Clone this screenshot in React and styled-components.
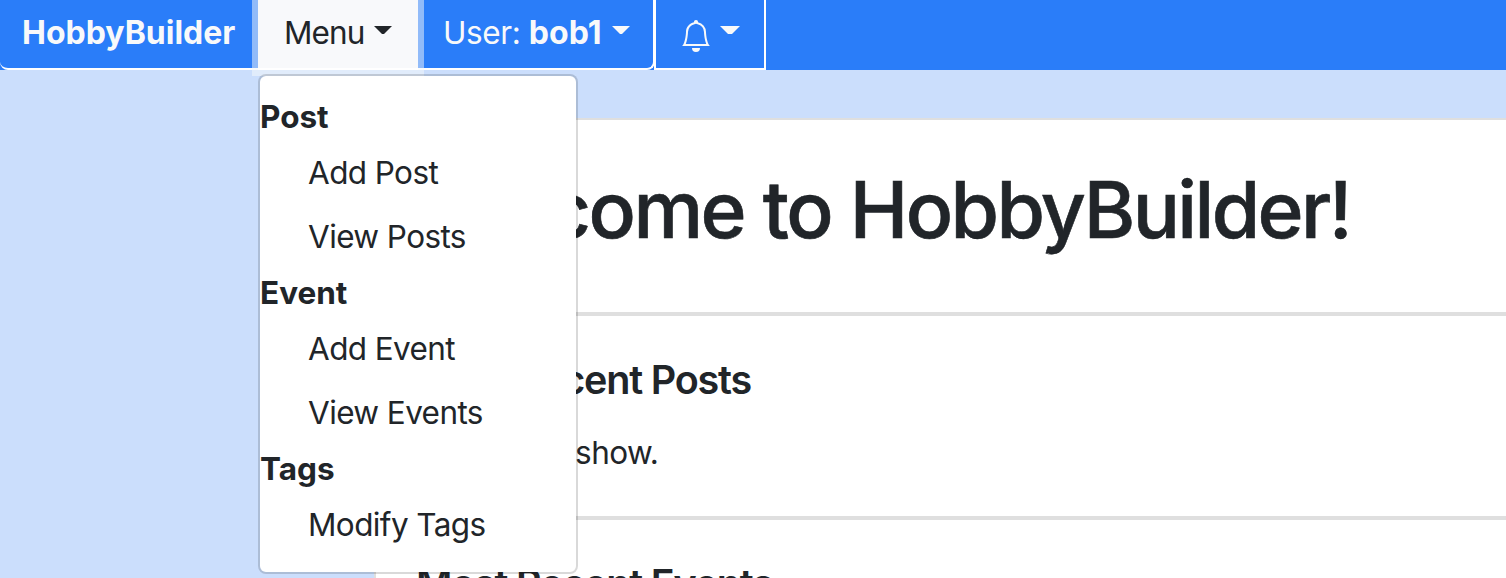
import React from 'react';
import styled, { createGlobalStyle } from 'styled-components';
import { BsBell } from 'react-icons/bs';

const Global = createGlobalStyle`
  *, *::before, *::after { box-sizing: border-box; }
  html, body { margin: 0; }
  body {
    background: #cbdefc;
    color: #212529;
    font-family: Inter, "Liberation Sans", sans-serif;
    font-size: 31.5px;
    line-height: 48px;
    letter-spacing: -0.6px;
  }
`;

const Page = styled.div`
  display: flex;
  flex-direction: column;
  height: 100vh;
  overflow: hidden;
`;

const Navbar = styled.nav`
  display: flex;
  flex: none;
  height: 70px;
  background: #2a7df9;
`;

const ButtonGroup = styled.div`
  display: flex;
  width: 655px;
  border: 2px solid #fff;
  border-top: 0;
  border-left: 0;
  border-radius: 0 0 8px 8px;
`;

const NavButton = styled.button`
  display: flex;
  align-items: flex-start;
  flex: none;
  width: ${(p) => p.$width}px;
  height: 68px;
  margin: 0;
  padding: 9px 0 0 ${(p) => p.$inset}px;
  border: 0;
  background: none;
  color: #f8f9fa;
  font: inherit;
  letter-spacing: ${(p) => p.$track ?? -0.6}px;
  white-space: pre;
  text-align: left;
`;

const Strong = styled.b`
  font-size: 32px;
  font-weight: 700;
  letter-spacing: 0;
`;

const MenuSlot = styled.div`
  position: relative;
  z-index: 1;
  flex: none;
  width: 160px;
  margin: 0 6px;
`;

const ActiveButton = styled(NavButton)`
  height: 70px;
  background: #f8f9fb;
  border-bottom: 2px solid #fff;
  color: #212529;
  box-shadow: 0 0 0 6px rgba(248, 249, 250, 0.5);
`;

const BellButton = styled(NavButton)`
  height: 70px;
  margin-left: -1px;
  padding-top: 20px;
  border: solid #fff;
  border-width: 0 2px 2px;
`;

const Caret = styled.span`
  width: ${(p) => p.$width}px;
  height: 8px;
  margin: ${(p) => p.$top}px 0 0 ${(p) => p.$gap}px;
  border: solid transparent;
  border-width: 8px 8px 0;
  border-top-color: currentColor;
`;

const Dropdown = styled.ul`
  position: absolute;
  top: 74px;
  left: 0;
  width: 320px;
  height: 500px;
  margin: 0;
  padding: 17px 0 0;
  list-style: none;
  background: #fff;
  background-clip: padding-box;
  border: 2px solid rgba(0, 0, 0, 0.15);
  border-radius: 8px;
`;

const GroupTitle = styled.li`
  height: 48px;
  font-weight: 700;
  letter-spacing: 0;
`;

const MenuItem = styled.li`
  height: 64px;
  padding: 8px 0 0 48px;
`;

const Panel = styled.main`
  flex: 1;
  min-height: 0;
  margin: 48px 0 0 374px;
  overflow: hidden;
  background: #fff;
  border: solid #dfdfdf;
  border-width: 2px 0 0 2px;
  white-space: nowrap;
`;

const Section = styled.section`
  height: ${(p) => p.$height}px;
  padding: ${(p) => p.$top}px 0 0 40px;
  border-bottom: 4px solid #dfdfdf;
`;

const Title = styled.h1`
  margin: 0 0 0 -3px;
  font-size: 78.5px;
  font-weight: 500;
  line-height: 96px;
  letter-spacing: -2.6px;
  word-spacing: 0.5px;
  -webkit-text-stroke: 0.6px currentColor;
`;

const Heading = styled.h2`
  margin: 0;
  font-size: 39.5px;
  font-weight: 600;
  line-height: 48px;
  letter-spacing: -1.2px;
`;

const Text = styled.p`
  margin: 25px 0 0 2px;
`;

const groups = [
  { title: 'Post', items: ['Add Post', 'View Posts'] },
  { title: 'Event', items: ['Add Event', 'View Events'] },
  { title: 'Tags', items: ['Modify Tags'] },
];

export default function App() {
  return (
    <Page>
      <Global />
      <Navbar>
        <ButtonGroup>
          <NavButton $width={252} $inset={22}><Strong>HobbyBuilder</Strong></NavButton>
          <MenuSlot>
            <ActiveButton $width={160} $inset={26} $track={-0.9}>Menu<Caret $width={18} $top={17} $gap={10} /></ActiveButton>
            <Dropdown>
              {groups.map((g) => (
                <React.Fragment key={g.title}>
                  <GroupTitle>{g.title}</GroupTitle>
                  {g.items.map((i) => <MenuItem key={i}>{i}</MenuItem>)}
                </React.Fragment>
              ))}
            </Dropdown>
          </MenuSlot>
          <NavButton $width={228} $inset={19} $track={-0.4}>User: <Strong>bob1</Strong><Caret $width={18} $top={17} $gap={10} /></NavButton>
        </ButtonGroup>
        <BellButton $width={112} $inset={24}><BsBell size={32} /><Caret $width={20} $top={6} $gap={8} /></BellButton>
      </Navbar>
      <Panel>
        <Section $height={196} $top={42}><Title>Welcome to HobbyBuilder!</Title></Section>
        <Section $height={204} $top={40}>
          <Heading>Most Recent Posts</Heading>
          <Text>Nothing to show.</Text>
        </Section>
        <Section $height={204} $top={40}><Heading>Most Recent Events</Heading></Section>
      </Panel>
    </Page>
  );
}
